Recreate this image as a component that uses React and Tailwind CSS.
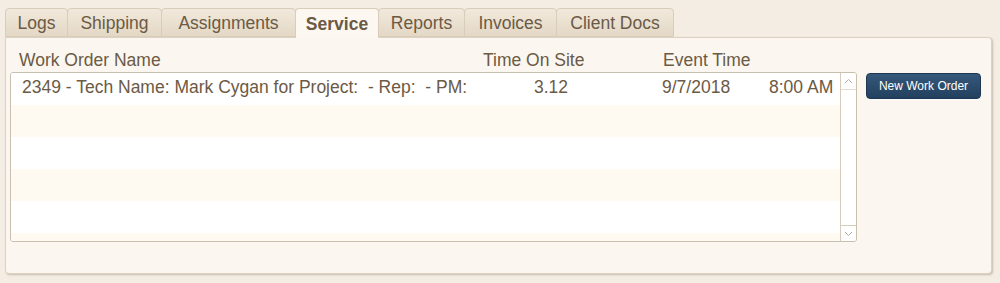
import { useState } from 'react'

const tabs = [
    { label: 'Logs', width: 'w-[63px]' },
    { label: 'Shipping', width: 'w-[95px]' },
    { label: 'Assignments', width: 'w-[135px]' },
    { label: 'Service', width: 'w-[84px]' },
    { label: 'Reports', width: 'w-[87px]' },
    { label: 'Invoices', width: 'w-[93px]' },
    { label: 'Client Docs', width: 'w-[118px]' },
]

const workOrders = [
    { name: '2349 - Tech Name: Mark Cygan for Project:  - Rep:  - PM:', time: '3.12', date: '9/7/2018', hour: '8:00 AM' },
]

function Chevron({ up }) {
    return <svg width="9" height="6" viewBox="0 0 9 6" className="text-[#b9ad9c]">
        <path d={up ? 'M1 5 L4.5 1.5 L8 5' : 'M1 1 L4.5 4.5 L8 1'} fill="none" stroke="currentColor" strokeWidth="1" />
    </svg>
}

export default function App() {
    const [active, setActive] = useState('Service')
    const rows = [...workOrders, ...Array(6 - workOrders.length).fill(null)]

    return <main className="w-[1000px] h-[283px] bg-[#f3ede3] pl-[5px] pt-[8px] text-[#6b5a45] text-[17.5px] font-['Liberation_Sans',Arial,sans-serif] overflow-hidden">
        {/* tabs */}
        <div className="flex h-[29px]">
            {tabs.map(tab => <button
                key={tab.label}
                onClick={() => setActive(tab.label)}
                className={tab.label === active
                    ? `${tab.width} h-[30px] -mr-px relative z-10 border border-b-0 border-[#d9ccb8] rounded-t-[4px] bg-[#fcf8f1] font-bold leading-none pt-[3px]`
                    : `${tab.width} h-[29px] -mr-px border border-[#d9ccb8] rounded-t-[4px] bg-gradient-to-b from-[#f1e9dc] to-[#e4d8c5] leading-none pt-[3px]`}
            >
                {tab.label}
            </button>)}
        </div>

        {/* panel */}
        <section className="w-[987px] h-[237px] bg-[#fbf7f0] border border-[#ddd2c1] rounded-b-[4px] rounded-tr-[4px] shadow-[1px_1px_2px_rgba(120,100,70,0.35)] pl-[4px] pt-[12px]">
            <div className="flex h-[22px] items-center leading-none">
                <div className="w-[473px] pl-[9px]">Work Order Name</div>
                <div className="w-[180px]">Time On Site</div>
                <div>Event Time</div>
            </div>

            <div className="flex items-start gap-[9px]">
                <div className="w-[847px] h-[170px] border border-[#c9bfae] rounded-[3px] flex overflow-hidden">
                    <div className="flex-1 flex flex-col">
                        {rows.map((row, i) => <div
                            key={i}
                            className={`h-[32px] shrink-0 flex items-center pl-[11px] pb-[3px] ${i % 2 === 0 ? 'bg-white' : 'bg-[#fefaf2]'}`}
                        >
                            {row && <>
                                <div className="w-[512px] whitespace-pre">{row.name}</div>
                                <div className="w-[128px]">{row.time}</div>
                                <div className="w-[107px]">{row.date}</div>
                                <div>{row.hour}</div>
                            </>}
                        </div>)}
                    </div>
                    <div className="w-[16px] border-l border-[#d6ccbc] bg-white flex flex-col justify-between">
                        <div className="h-[17px] border-b border-[#e3dbcf] flex items-center justify-center"><Chevron up /></div>
                        <div className="h-[16px] border-t border-[#d6ccbc] flex items-center justify-center"><Chevron /></div>
                    </div>
                </div>

                <button className="mt-px w-[115px] h-[26px] rounded-[4px] border border-[#1d3651] bg-gradient-to-b from-[#36587b] to-[#23415f] text-white text-[12px] shadow-[0_1px_0_rgba(255,255,255,0.5)]">
                    New Work Order
                </button>
            </div>
        </section>
    </main>
}
